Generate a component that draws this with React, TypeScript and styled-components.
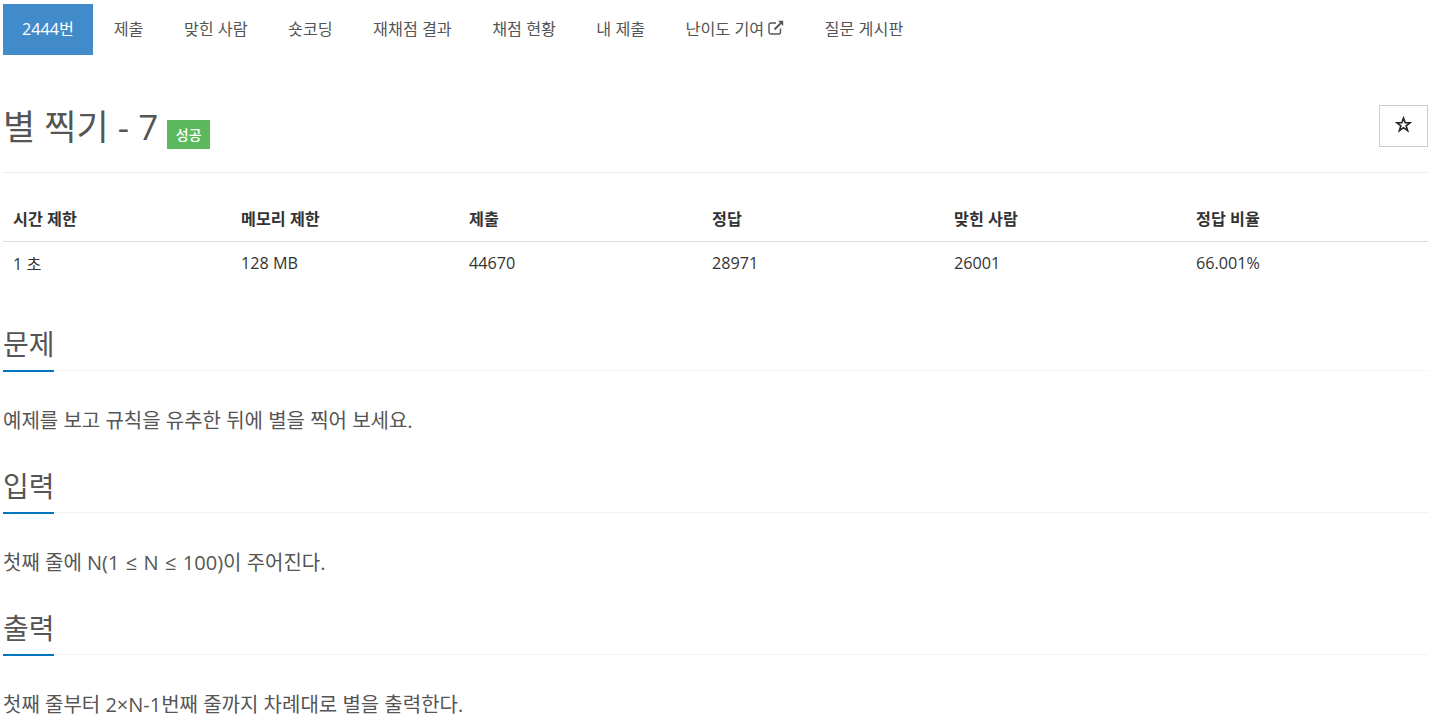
import { ReactNode } from 'react';
import styled, { createGlobalStyle } from 'styled-components';

const FONT = `'Open Sans', 'Noto Sans CJK KR', sans-serif`;

const NAV_ITEMS = [
  { label: '2444번', active: true },
  { label: '제출' },
  { label: '맞힌 사람' },
  { label: '숏코딩' },
  { label: '재채점 결과' },
  { label: '채점 현황' },
  { label: '내 제출' },
  { label: '난이도 기여', external: true },
  { label: '질문 게시판' },
];

const COLUMNS = [
  { head: '시간 제한', value: '1 초', width: 228 },
  { head: '메모리 제한', value: '128 MB', width: 228 },
  { head: '제출', value: '44670', width: 243 },
  { head: '정답', value: '28971', width: 242 },
  { head: '맞힌 사람', value: '26001', width: 242 },
  { head: '정답 비율', value: '66.001%', width: 242 },
];

const InputBody = () => (
  <>
    첫째 줄에 N(1 <MathSign>≤</MathSign> N <MathSign>≤</MathSign> 100)이 주어진다.
  </>
);

const SECTIONS: { title: string; body: ReactNode }[] = [
  { title: '문제', body: '예제를 보고 규칙을 유추한 뒤에 별을 찍어 보세요.' },
  { title: '입력', body: <InputBody /> },
  { title: '출력', body: '첫째 줄부터 2×N-1번째 줄까지 차례대로 별을 출력한다.' },
];

const ExternalIcon = () => (
  <IconSvg viewBox="0 0 16 15" fill="none" stroke="currentColor">
    <path d="M12.5 8.5v3.5a2 2 0 0 1-2 2H3a2 2 0 0 1-2-2V5a2 2 0 0 1 2-2h5" strokeWidth="1.4" />
    <path d="M6.5 9.5 14 2" strokeWidth="1.8" />
    <path d="M10 .8h5.2V6z" fill="currentColor" stroke="none" />
  </IconSvg>
);

const StarIcon = () => (
  <StarSvg viewBox="0 0 18 18" fill="none" stroke="currentColor">
    <path d="M9 2.2 10.8 7.2H16L11.8 10.4 13.4 15.6 9 12.4 4.6 15.6 6.2 10.4 2 7.2H7.2Z" strokeWidth="1.7" />
  </StarSvg>
);

export default function App() {
  return (
    <Page>
      <GlobalStyle />
      <Nav>
        {NAV_ITEMS.map((item) => (
          <NavItem key={item.label} $active={item.active}>
            {item.label}
            {item.external && <ExternalIcon />}
          </NavItem>
        ))}
      </Nav>

      <TitleRow>
        <Title>
          별 찍기 - 7 <Badge>성공</Badge>
        </Title>
        <StarButton>
          <StarIcon />
        </StarButton>
      </TitleRow>

      <InfoTable>
        <colgroup>
          {COLUMNS.map((c) => (
            <Col key={c.head} $width={c.width} />
          ))}
        </colgroup>
        <thead>
          <tr>
            {COLUMNS.map((c) => (
              <Th key={c.head}>{c.head}</Th>
            ))}
          </tr>
        </thead>
        <tbody>
          <tr>
            {COLUMNS.map((c) => (
              <Td key={c.head}>{c.value}</Td>
            ))}
          </tr>
        </tbody>
      </InfoTable>

      {SECTIONS.map((section) => (
        <Section key={section.title}>
          <Headline>
            <HeadlineText>{section.title}</HeadlineText>
          </Headline>
          <Body>{section.body}</Body>
        </Section>
      ))}
    </Page>
  );
}

const GlobalStyle = createGlobalStyle`
  html, body {
    margin: 0;
    padding: 0;
    background: #fff;
    overflow: hidden;
  }
  * {
    box-sizing: border-box;
  }
`;

const Page = styled.div`
  height: 728px;
  overflow: hidden;
  padding: 4px 9px 0 3px;
  font-family: ${FONT};
  color: #333;
`;

const Nav = styled.nav`
  display: flex;
  height: 51px;
`;

const NavItem = styled.a<{ $active?: boolean }>`
  display: flex;
  align-items: center;
  gap: 4px;
  padding: 0 ${(p) => (p.$active ? '19px' : '20.2px')} 4px;
  margin-right: ${(p) => (p.$active ? '0.6px' : '0')};
  font-size: 16.2px;
  white-space: nowrap;
  color: ${(p) => (p.$active ? '#fff' : '#555')};
  background: ${(p) => (p.$active ? '#428bca' : 'transparent')};
`;

const IconSvg = styled.svg`
  width: 16px;
  height: 15px;
`;

const StarSvg = styled.svg`
  width: 17px;
  height: 17px;
  color: #222;
`;

const TitleRow = styled.div`
  display: flex;
  justify-content: space-between;
  align-items: flex-start;
  height: 118px;
  padding-top: 49px;
  border-bottom: 1px solid #eee;
`;

const Title = styled.h1`
  margin: 0;
  font-size: 35px;
  line-height: 46px;
  font-weight: 400;
  color: #555;
`;

const Badge = styled.span`
  display: inline-block;
  padding: 0 8.5px;
  height: 29px;
  line-height: 29px;
  font-size: 14px;
  font-weight: 500;
  color: #fff;
  background: #5cb85c;
`;

const StarButton = styled.button`
  display: flex;
  align-items: center;
  justify-content: center;
  width: 49px;
  height: 42px;
  margin-top: 1px;
  padding: 0 0 4px;
  background: #fff;
  border: 1px solid #ccc;
`;

const InfoTable = styled.table`
  width: 100%;
  table-layout: fixed;
  border-collapse: collapse;
  margin-top: 24px;
  font-size: 16.2px;
`;

const Col = styled.col<{ $width: number }>`
  width: ${(p) => p.$width}px;
`;

const Th = styled.th`
  height: 44px;
  padding: 0 10px 2px;
  text-align: left;
  font-weight: 700;
  color: #333;
  border-bottom: 1px solid #ddd;
`;

const Td = styled.td`
  height: 43px;
  padding: 0 10px;
  color: #333;
`;

const Section = styled.section`
  margin-top: 29px;
  & + & {
    margin-top: 0;
  }
`;

const Headline = styled.div`
  height: 58px;
  border-bottom: 1px dotted #e4e4e4;
  display: flex;
  align-items: flex-end;
`;

const HeadlineText = styled.h2`
  margin: 0 0 -2px;
  width: 51px;
  height: 60px;
  line-height: 64px;
  font-size: 28px;
  font-weight: 400;
  color: #555;
  border-bottom: 2.5px solid #0076c0;
  white-space: nowrap;
`;

const Body = styled.p`
  margin: 0;
  padding-top: 36px;
  height: 84px;
  font-size: 20px;
  line-height: 28px;
  color: #555;
`;

const MathSign = styled.span`
  margin: 0 1.2px;
`;
